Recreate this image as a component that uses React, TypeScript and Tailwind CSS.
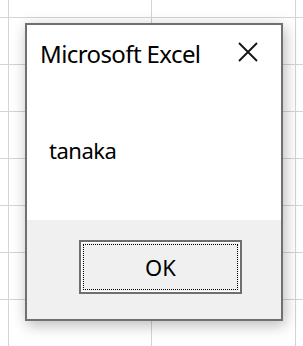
import React from "react";

// Excel message box sitting over the sheet grid
const GRID_CLASSES =
  "bg-[linear-gradient(to_right,transparent_8px,#d4d4d4_8px,#d4d4d4_9px,transparent_9px,transparent_151px,#d4d4d4_151px,#d4d4d4_152px,transparent_152px,transparent_295px,#d4d4d4_295px,#d4d4d4_296px,transparent_296px),linear-gradient(to_bottom,#d4d4d4_1px,transparent_1px)] bg-[size:100%_100%,100%_47px] bg-[position:0_0,0_17px]";

function CloseIcon() {
  return (
    <svg width="20" height="20" viewBox="0 0 20 20" className="block">
      <path
        d="M1 1 L19 19 M19 1 L1 19"
        stroke="#111"
        strokeWidth="1.8"
        fill="none"
      />
    </svg>
  );
}

const MessageBox: React.FC<{ title: string; message: string }> = ({
  title,
  message,
}) => {
  return (
    <div className="w-[258px] h-[298px] border-2 border-[#707070] bg-white flex flex-col shadow-[2px_4px_14px_rgba(0,0,0,0.28)]">
      <div className="h-[195px] bg-white pl-[13px] pr-[23px]">
        <div className="flex justify-between items-start">
          <div className="pt-[13px] text-[24px] leading-[32px] tracking-[-0.6px] text-black">
            {title}
          </div>
          <button className="mt-[17px]">
            <CloseIcon />
          </button>
        </div>
        <div className="mt-[65px] pl-[9px] text-[22px] leading-[30px] tracking-[-0.5px] text-black">
          {message}
        </div>
      </div>
      <div className="flex-1 bg-[#f0f0f0] pt-[20px] pl-[52px]">
        <button className="w-[163px] h-[54px] border-2 border-[#6f6f6f] bg-[#f0f0f0] p-[2px] shadow-[inset_0_0_0_1px_#ffffff]">
          <div className="h-full w-full border border-dotted border-black flex items-center justify-center text-[22px] leading-none text-black">
            OK
          </div>
        </button>
      </div>
    </div>
  );
}

export default function App() {
  return (
    <div
      className={`w-[303px] h-[346px] bg-white pt-[23px] pl-[25px] font-['Noto_Sans',sans-serif] ${GRID_CLASSES}`}
    >
      <MessageBox title="Microsoft Excel" message="tanaka" />
    </div>
  );
}
